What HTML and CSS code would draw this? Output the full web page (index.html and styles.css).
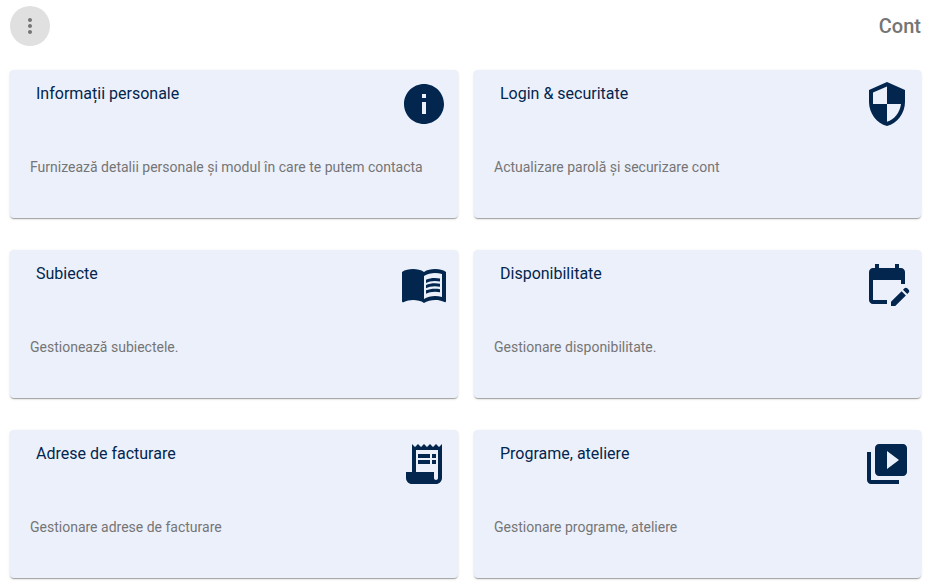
FILE: index.html
```html
<!DOCTYPE html>
<html lang="ro">
  <head>
    <meta charset="UTF-8" />
    <meta name="viewport" content="width=device-width, initial-scale=1.0" />
    <title>Cont</title>
    <link rel="stylesheet" href="styles.css">
  </head>
  <body>
    <header class="topbar">
      <button class="menu-btn" type="button" aria-label="Meniu">
        <svg class="menu-icon" viewBox="0 0 24 24"><path d="M12 8c1.1 0 2-.9 2-2s-.9-2-2-2-2 .9-2 2 .9 2 2 2zm0 2c-1.1 0-2 .9-2 2s.9 2 2 2 2-.9 2-2-.9-2-2-2zm0 6c-1.1 0-2 .9-2 2s.9 2 2 2 2-.9 2-2-.9-2-2-2z"/></svg>
      </button>
      <h1 class="page-title">Cont</h1>
    </header>

    <main class="grid">
      <section class="card">
        <div class="card-head">
          <h2 class="card-title">Informații personale</h2>
          <svg class="card-icon" viewBox="0 0 24 24"><path d="M12 2C6.48 2 2 6.48 2 12s4.48 10 10 10 10-4.48 10-10S17.52 2 12 2zm1 15h-2v-6h2v6zm0-8h-2V7h2v2z"/></svg>
        </div>
        <p class="card-text">Furnizează detalii personale și modul în care te putem contacta</p>
      </section>

      <section class="card">
        <div class="card-head">
          <h2 class="card-title">Login &amp; securitate</h2>
          <svg class="card-icon" viewBox="0 0 24 24"><path d="M12 1L3 5v6c0 5.55 3.84 10.74 9 12 5.16-1.26 9-6.45 9-12V5l-9-4zm0 10.99h7c-.53 4.12-3.28 7.79-7 8.94V12H5V6.3l7-3.11v8.8z"/></svg>
        </div>
        <p class="card-text">Actualizare parolă și securizare cont</p>
      </section>

      <section class="card">
        <div class="card-head">
          <h2 class="card-title">Subiecte</h2>
          <svg class="card-icon" viewBox="0 0 24 24"><path d="M21 5c-1.11-.35-2.33-.5-3.5-.5-1.95 0-4.05.4-5.5 1.5-1.45-1.1-3.55-1.5-5.5-1.5S2.45 4.9 1 6v14.65c0 .25.25.5.5.5.1 0 .15-.05.25-.05C3.1 20.45 5.05 20 6.5 20c1.95 0 4.05.4 5.5 1.5 1.35-.85 3.8-1.5 5.5-1.5 1.65 0 3.35.3 4.75 1.05.1.05.15.05.25.05.25 0 .5-.25.5-.5V6c-.6-.45-1.25-.75-2-1zm0 13.5c-1.1-.35-2.3-.5-3.5-.5-1.7 0-4.15.65-5.5 1.5V8c1.35-.85 3.8-1.5 5.5-1.5 1.2 0 2.4.15 3.5.5v11.5z"/><path d="M17.5 10.5c.88 0 1.73.09 2.5.26V9.24c-.79-.15-1.64-.24-2.5-.24-1.7 0-3.24.29-4.5.83v1.66c1.13-.64 2.7-.99 4.5-.99zM13 12.49v1.66c1.13-.64 2.7-.99 4.5-.99.88 0 1.73.09 2.5.26V11.9c-.79-.15-1.64-.24-2.5-.24-1.7 0-3.24.3-4.5.83zM17.5 14.33c-1.7 0-3.24.29-4.5.83v1.66c1.13-.64 2.7-.99 4.5-.99.88 0 1.73.09 2.5.26v-1.52c-.79-.16-1.64-.24-2.5-.24z"/></svg>
        </div>
        <p class="card-text">Gestionează subiectele.</p>
      </section>

      <section class="card">
        <div class="card-head">
          <h2 class="card-title">Disponibilitate</h2>
          <svg class="card-icon" viewBox="0 0 24 24"><path d="M5 10h14v2h2V6c0-1.1-.9-2-2-2h-1V2h-2v2H8V2H6v2H5c-1.11 0-1.99.9-1.99 2L3 20c0 1.1.89 2 2 2h7v-2H5V10zm17.84 6.28-.71.71-2.12-2.12.71-.71c.39-.39 1.02-.39 1.41 0l.71.71c.39.39.39 1.02 0 1.41zm-3.54-.7 2.12 2.12-5.3 5.3H14v-2.12l5.3-5.3z"/></svg>
        </div>
        <p class="card-text">Gestionare disponibilitate.</p>
      </section>

      <section class="card">
        <div class="card-head">
          <h2 class="card-title">Adrese de facturare</h2>
          <svg class="card-icon" viewBox="0 0 24 24"><path d="M19.5 3.5 18 2l-1.5 1.5L15 2l-1.5 1.5L12 2l-1.5 1.5L9 2 7.5 3.5 6 2v14H3v3c0 1.66 1.34 3 3 3h12c1.66 0 3-1.34 3-3V2l-1.5 1.5zM19 19c0 .55-.45 1-1 1s-1-.45-1-1v-3H8V5h11v14z"/><path d="M9 7h6v2H9zm7 0h2v2h-2zm-7 3h6v2H9zm7 0h2v2h-2z"/></svg>
        </div>
        <p class="card-text">Gestionare adrese de facturare</p>
      </section>

      <section class="card">
        <div class="card-head">
          <h2 class="card-title">Programe, ateliere</h2>
          <svg class="card-icon" viewBox="0 0 24 24"><path d="M4 6H2v14c0 1.1.9 2 2 2h14v-2H4V6zm16-4H8c-1.1 0-2 .9-2 2v12c0 1.1.9 2 2 2h12c1.1 0 2-.9 2-2V4c0-1.1-.9-2-2-2zm-8 12.5v-9l6 4.5-6 4.5z"/></svg>
        </div>
        <p class="card-text">Gestionare programe, ateliere</p>
      </section>
    </main>
  </body>
</html>
```

FILE: styles.css
```css
body {
  font-family: Roboto, "Liberation Sans", sans-serif;
  margin: 0;
  padding: 6px 16px 8px 10px;
  background-color: #fff;
}
.topbar {
  display: flex;
  justify-content: space-between;
  align-items: center;
  height: 40px;
  margin-bottom: 24px;
}
.menu-btn {
  display: flex;
  align-items: center;
  justify-content: center;
  width: 40px;
  height: 40px;
  padding: 0;
  border: none;
  border-radius: 50%;
  background: #e0e0e0;
}
.menu-icon {
  width: 24px;
  height: 24px;
  fill: #757575;
}
.page-title {
  margin: 0;
  font-size: 20px;
  font-weight: 500;
  color: #757575;
}
.grid {
  display: grid;
  grid-template-columns: 448px 1fr;
  gap: 32px 16px;
}
.card {
  height: 148px;
  box-sizing: border-box;
  padding: 10px 10px 0 20px;
  background: #ecf0fb;
  border-radius: 4px;
  box-shadow: 0px 2px 1px -1px rgba(0, 0, 0, 0.2), 0px 1px 1px 0px rgba(0, 0, 0, 0.14), 0px 1px 3px 0px rgba(0, 0, 0, 0.12);
}
.card-head {
  display: flex;
  justify-content: space-between;
  align-items: flex-start;
}
.card-title {
  margin: 4px 0 0 6px;
  font-size: 16px;
  font-weight: 400;
  line-height: 19px;
  color: #02264e;
}
.card-icon {
  width: 48px;
  height: 48px;
  fill: #02264e;
}
.card-text {
  margin: 31px 0 0;
  font-size: 14px;
  line-height: 16px;
  color: #757575;
}
```
